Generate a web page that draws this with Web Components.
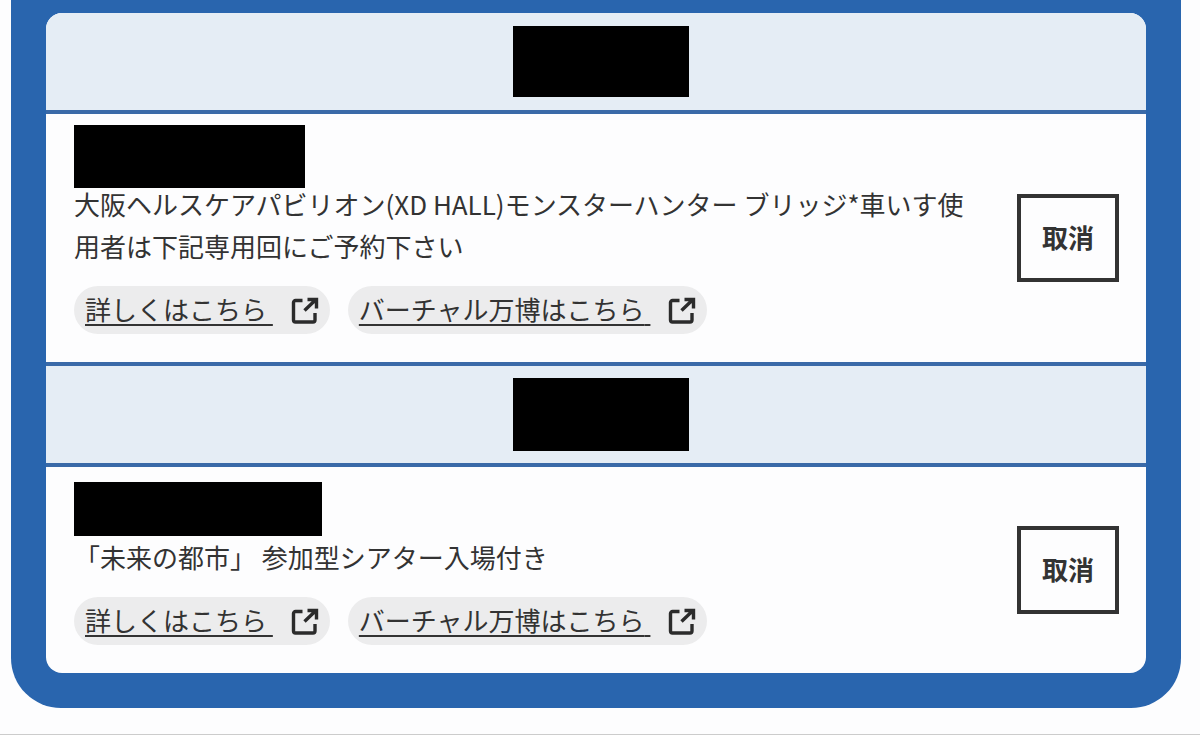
<!DOCTYPE html>
<html lang="ja">
<head>
<meta charset="utf-8">
<meta name="viewport" content="width=device-width, initial-scale=1">
<title>予約一覧</title>
<style>
  body {
    margin: 0;
    background: #fdfdfe;
    color: #333;
    font: 26px/42px "Noto Sans CJK JP", sans-serif;
  }
</style>
</head>
<body>

<ticket-list>
  <ticket-date><masked-text style="--width: 176px; --height: 71px"></masked-text></ticket-date>
  <ticket-item>
    <masked-text slot="time" style="--width: 231px; --height: 63px"></masked-text>
    大阪ヘルスケアパビリオン(XD HALL)モンスターハンター ブリッジ*車いす使用者は下記専用回にご予約下さい
    <link-chip slot="links" href="#detail-1">詳しくはこちら</link-chip>
    <link-chip slot="links" href="#virtual-1">バーチャル万博はこちら</link-chip>
  </ticket-item>
  <ticket-date><masked-text style="--width: 176px; --height: 73px"></masked-text></ticket-date>
  <ticket-item>
    <masked-text slot="time" style="--width: 248px; --height: 54px"></masked-text>
    「未来の都市」 参加型シアター入場付き
    <link-chip slot="links" href="#detail-2">詳しくはこちら</link-chip>
    <link-chip slot="links" href="#virtual-2">バーチャル万博はこちら</link-chip>
  </ticket-item>
</ticket-list>

<script>
;(function(){
  "use strict"


  // Shared base: clones the class's template into an open root
  class BaseElement extends HTMLElement {
    constructor() {
      super()
      const template = document.createElement("template")
      template.innerHTML = this.constructor.html
      this.attachShadow({ mode: "open" })
      this.shadowRoot.appendChild(template.content.cloneNode(true))
    }
  }


  class TicketList extends BaseElement {
    static get html() {
      return `
        <style>
          :host {
            display: block;
            box-sizing: border-box;
            min-height: 100vh;
            padding: 0 19px 26px 11px;
            border-bottom: 1px solid #ccc;
          }
          main {
            padding: 13px 35px 35px;
            background: #2965ae;
            border-radius: 0 0 50px 50px;
          }
          section {
            overflow: hidden;
            background: #fdfdfe;
            border-radius: 16px;
          }
        </style>
        <main><section><slot></slot></section></main>
      `
    }
  }


  class TicketDate extends BaseElement {
    static get html() {
      return `
        <style>
          :host {
            display: flex;
            justify-content: center;
            align-items: center;
            height: 97px;
            padding-left: 9px;
            background: #e5edf5;
            border-bottom: 4px solid #3a6aa8;
          }
        </style>
        <slot></slot>
      `
    }
  }


  class TicketItem extends BaseElement {
    static get html() {
      return `
        <style>
          :host {
            display: flex;
            align-items: center;
            gap: 28px;
            padding: 0 27px 28px 28px;
          }
          :host(:not(:last-child)) {
            border-bottom: 4px solid #3a6aa8;
          }
          article {
            flex: 1;
            min-width: 0;
          }
          header {
            display: flex;
            align-items: center;
            height: 54px;
            padding-top: 15px;
          }
          p {
            margin: 0 0 19px;
          }
          nav {
            display: flex;
            flex-wrap: wrap;
            gap: 18px;
          }
          button {
            width: 102px;
            height: 88px;
            margin-top: 28px;
            padding: 0 0 2px;
            border: 4px solid #333;
            background: none;
            color: inherit;
            font: inherit;
            font-weight: bold;
            cursor: pointer;
          }
        </style>
        <article>
          <header><slot name="time"></slot></header>
          <p><slot></slot></p>
          <nav><slot name="links"></slot></nav>
        </article>
        <button type="button">取消</button>
      `
    }
  }


  class LinkChip extends BaseElement {
    static get html() {
      return `
        <style>
          :host {
            display: block;
          }
          a {
            display: flex;
            align-items: center;
            gap: 18px;
            height: 48px;
            padding: 0 11px;
            border-radius: 24px;
            background: #ececed;
            color: inherit;
            text-decoration: none;
          }
          span {
            padding-bottom: 2px;
            text-decoration: underline;
            text-decoration-thickness: 2px;
            text-decoration-skip-ink: none;
            text-underline-offset: 4px;
          }
          svg {
            flex: none;
            width: 28px;
            height: 28px;
            fill: none;
            stroke: #2b2b2b;
            stroke-width: 3.4;
          }
        </style>
        <a>
          <span><slot></slot>&nbsp;</span>
          <svg viewBox="0 0 28 28" aria-hidden="true">
            <path d="M11.5 4.5H4.5a2 2 0 0 0-2 2V24a2 2 0 0 0 2 2H22a2 2 0 0 0 2-2V17"/>
            <path d="M13.5 14.5L25 3.5M16.5 3.5H25.5V12.5"/>
          </svg>
        </a>
      `
    }

    connectedCallback() {
      this.shadowRoot.querySelector("a").href = this.getAttribute("href")
    }
  }


  class MaskedText extends BaseElement {
    static get html() {
      return `
        <style>
          :host {
            display: block;
            flex: none;
            width: var(--width);
            height: var(--height);
            background: #000;
          }
        </style>
      `
    }
  }


  customElements.define("ticket-list", TicketList)
  customElements.define("ticket-date", TicketDate)
  customElements.define("ticket-item", TicketItem)
  customElements.define("link-chip", LinkChip)
  customElements.define("masked-text", MaskedText)
})()
</script>
</body>
</html>
